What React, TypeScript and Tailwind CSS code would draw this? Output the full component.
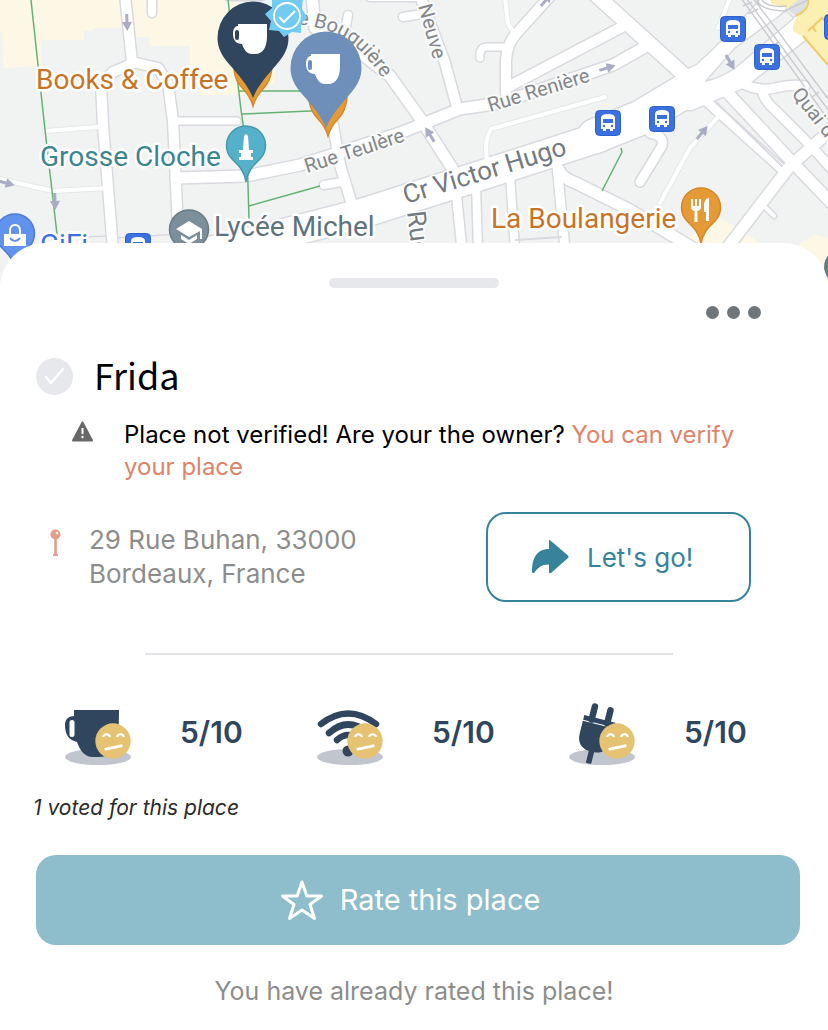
import type { ReactNode } from "react"

interface Road {
    d: string;
    width: number;
}

const roads: Road[] = [
    { d: "M125 -5L132 62L158 68L168 84L173 121L179 250", width: 10 },
    { d: "M132 64L113 72L101 84L103 125L113 250", width: 10 },
    { d: "M152 -5V13", width: 8 },
    { d: "M228 -4H262", width: 8 },
    { d: "M173 121H237", width: 7 },
    { d: "M176 178L246 176L300 165L400 133L460 109L500 103L613 65L645 47", width: 11 },
    { d: "M333 125L340 165L353 208", width: 10 },
    { d: "M324 185L342 182", width: 8 },
    { d: "M312 -5L315 28L350 45L390 76L420 118L452 168", width: 11 },
    { d: "M348 15L345 32", width: 8 },
    { d: "M370 -4L420 -4L445 63L457 107", width: 10 },
    { d: "M403 17L422 14", width: 8 },
    { d: "M190 256L270 237L360 214L473 178L600 137", width: 29 },
    { d: "M595 136L640 118L700 82", width: 34 },
    { d: "M692 86L724 56L785 -8", width: 24 },
    { d: "M690 98L738 77L806 24", width: 24 },
    { d: "M506 93V60Q507 44 516 34L552 -6", width: 10 },
    { d: "M506 88L622 27", width: 10 },
    { d: "M596 -5L692 82", width: 14 },
    { d: "M507 47H486Q479 48 480 58", width: 7 },
    { d: "M456 190L462 250", width: 9 },
    { d: "M476 185L478 250", width: 8 },
    { d: "M510 175L515 250", width: 8 },
    { d: "M557 165L565 250", width: 9 },
    { d: "M559 170Q562 178 576 183L630 210L696 250", width: 11 },
    { d: "M650 133Q665 136 662 146L640 182", width: 9 },
    { d: "M705 100L785 172", width: 9 },
    { d: "M725 90L795 165L840 212", width: 11 },
    { d: "M724 252L790 166L840 122", width: 11 },
    { d: "M740 82Q757 92 775 88Q790 84 805 86", width: 9 },
    { d: "M762 90Q764 101 776 111L810 145L840 178", width: 9 },
    { d: "M766 208L774 216", width: 4 },
]

const lightRoads = [
    "M45 131L99 127",
    "M0 179L53 191L107 188",
    "M505 -2L508 24L516 36",
    "M605 97L491 129Q484 140 487 160",
    "M660 203L690 148L717 118",
    "M730 -2L718 28",
]

const greenLines = [
    "M31 0L45 130L58 243",
    "M228 0L241 110L247 150L249 220",
    "M239 91H310",
    "M242 114L332 110",
    "M249 206L320 186",
    "M621 148L622 152L602 191",
]

const busStops = [[720, 16], [754, 44], [649, 106], [595, 110], [824, 14], [125, 233]]

// x, y, rotation in degrees, 0 points to the right
const arrows = [[127, 22, 88], [55, 201, 88], [6, 183, 15], [430, 135, -122], [607, 68, -17], [730, 62, 60], [702, 133, -50], [546, 0, -50]]

const Arrow = ({ x, y, angle }: { x: number; y: number; angle: number }) => (
    <g transform={`translate(${x} ${y}) rotate(${angle})`} fill="#a9acc4">
        <path d="M-8 -1.500H0V-5L9 0L0 5V1.500H-8Z" />
    </g>
)

const BusStop = ({ x, y }: { x: number; y: number }) => (
    <g transform={`translate(${x} ${y})`}>
        <rect x="0.5" y="0.5" width="25" height="25" rx="4" fill="#3a70df" stroke="#2d60cb" />
        <path d="M6 19V8Q6 4 13 4Q20 4 20 8V19H18V21H15V19H11V21H8V19Z" fill="#fff" />
        <path d="M8 9H18V13H8Z" fill="#3a70df" />
        <circle cx="9" cy="16" r="1.2" fill="#3a70df" />
        <circle cx="17" cy="16" r="1.2" fill="#3a70df" />
    </g>
)

const SmallPin = ({ x, y, fill, stroke, children }: { x: number; y: number; fill: string; stroke: string; children?: ReactNode }) => (
    <g transform={`translate(${x} ${y})`}>
        <path d="M0 36C-2 24 -7 20 -14 13A19.500 19.500 0 1 1 14 13C7 20 2 24 0 36Z" fill={fill} stroke={stroke} strokeWidth="1.500" />
        {children}
    </g>
)

// The orange pin is the map's own one, half hidden behind ours
const CoffeePin = ({ x, y, spot, fill }: { x: number; y: number; spot: number; fill: string }) => (
    <g transform={`translate(${x} ${y})`}>
        <path
            transform={`translate(${spot} 0)`}
            d="M-19 32C-18 40 -15 46 -10 51C-4 57 -2 61 0 68C2 61 4 57 10 51C15 46 18 40 19 30Z"
            fill="#e59b35"
            stroke="#d98529"
            strokeWidth="1.500"
        />
        <path d="M0 60C-5 47 -14 38 -24 26C-31 18 -35.500 10 -35.500 0A35.500 36.500 0 0 1 35.500 0C35.500 10 31 18 24 26C14 38 5 47 0 60Z" fill={fill} />
        <path d="M-15 -14H14V-2C14 9 10 16 2 16H-1C-6 16 -9 12 -11 6C-17 6 -20 2 -20 -4C-20 -9 -18 -12 -15 -12Z" fill="#fff" />
        <rect x="-18" y="-8" width="4" height="10" rx="2" fill={fill} />
    </g>
)

const label = "fill-[#5d737e] stroke-white stroke-[5px] [paint-order:stroke] [stroke-linejoin:round]"
const street = "fill-[#84868a] stroke-[#f8f9f9] stroke-[4px] [paint-order:stroke] [stroke-linejoin:round]"

const CityMap = () => (
    <svg
        className="block w-full h-72 bg-[#f1f3f3] font-[Roboto,sans-serif]"
        viewBox="0 0 828 288"
        preserveAspectRatio="xMidYMin slice"
        role="img"
        aria-label="Map"
    >
        <rect width="828" height="288" fill="#f1f3f3" />
        <path d="M0 0H240L247 70H275V84H247V95H200V84H190V46H150L149 37H122V28H94V31H84V40H41V66L4 68L2 32H0Z" fill="#fdf8e6" />
        <path d="M680 243L720 218L750 236L760 243ZM790 250L815 234L828 238V288Z" fill="#fdf8e6" />

        <g fill="none" strokeLinecap="round" strokeLinejoin="round">
            <path d="M58 238L108 236M113 238L180 234" stroke="#d9dae0" strokeWidth="1.500" />
            {roads.map((road) => (
                <path key={road.d} d={road.d} stroke="#d9dae0" strokeWidth={road.width + 3} />
            ))}
            {lightRoads.map((d) => (
                <path key={d} d={d} stroke="#e6e7e8" strokeWidth="6" />
            ))}
            {roads.map((road) => (
                <path key={road.d} d={road.d} stroke="#fff" strokeWidth={road.width} />
            ))}
            {lightRoads.map((d) => (
                <path key={d} d={d} stroke="#fff" strokeWidth="4" />
            ))}
            <path d="M706 81L735 48L786 11L794 18L768 40L735 68Q720 78 706 81Z" fill="#f1f3f3" stroke="#d9dae0" strokeWidth="1.500" />
            <path d="M716 102L782 166" stroke="#d9dae0" strokeWidth="2" />
            <path d="M516 240L561 237" stroke="#d9dae0" strokeWidth="2" />
        </g>

        <path d="M770 0H828V66L803 37L793 31Q792 20 800 15Q786 6 772 4Z" fill="#fcefb2" />
        <path d="M803 36L828 65M808 31L822 18L828 24M812 26L816 32" stroke="#f0cb6a" strokeWidth="2" fill="none" />
        <path d="M787 9L798 0H806Q810 8 796 16Z" fill="#dcdee2" />
        <path d="M808 0Q810 9 796 16" stroke="#f0cb6a" strokeWidth="2" fill="none" />
        <g stroke="#cbccd0" strokeWidth="1.500" fill="none">
            <path d="M741 -2L830 122M746 -2L834 118M753 -2L840 115M757 0Q760 10 785 11L808 0M762 0Q768 8 787 6" />
            <path d="M743 6L752 2M748 14L758 9M771 47L779 42M812 97L819 92" />
        </g>
        <g stroke="#64b272" strokeWidth="1.500" fill="none">
            {greenLines.map((d) => (
                <path key={d} d={d} />
            ))}
        </g>
        {arrows.map(([x, y, angle]) => (
            <Arrow key={`${x}-${y}`} x={x} y={y} angle={angle} />
        ))}

        <path id="bouguiere" d="M274 24Q322 22 350 42Q370 57 396 98" fill="none" />
        <g fontSize="20" className={street}>
            <text><textPath href="#bouguiere">Rue Bouguière</textPath></text>
            <text transform="translate(307 173) rotate(-18)">Rue Teulère</text>
            <text transform="translate(490 112) rotate(-17)">Rue Renière</text>
            <text transform="translate(418 6) rotate(74)">Neuve</text>
            <text transform="translate(791 94) rotate(52)">Quai des</text>
        </g>
        <g fontSize="26" fill="#747b80" stroke="#fff" strokeWidth="3" paintOrder="stroke">
            <text transform="translate(406 204) rotate(-17)">Cr Victor Hugo</text>
            <text transform="translate(407 212) rotate(83)">Rue</text>
        </g>
        <g fontSize="28" className={label}>
            <text x="36" y="89" className="fill-[#c87428]">Books &amp; Coffee</text>
            <text x="40" y="166" className="fill-[#3b8590]">Grosse Cloche</text>
            <text x="214" y="236">Lycée Michel</text>
            <text x="491" y="228" className="fill-[#c87428]">La Boulangerie</text>
            <text x="40" y="254" className="fill-[#3a70df]">GiFi</text>
        </g>

        {busStops.map(([x, y]) => (
            <BusStop key={`${x}-${y}`} x={x} y={y} />
        ))}

        <SmallPin x={246} y={146} fill="#54b1c9" stroke="#4599ab">
            <path d="M0 -12L2 -10L3 4H7V7H5V11H7V14H-7V11H-5V7H-7V4H-3L-2 -10Z" fill="#fff" />
        </SmallPin>
        <SmallPin x={701} y={208} fill="#e59b35" stroke="#d98529">
            <path d="M-10 -9V-1Q-10 2 -6.500 3V14H-3.500V3Q0 2 0 -1V-9H-2V-2H-4V-9H-6V-2H-8V-9ZM3 4V-4Q4 -10 8 -10V13H5V4Z" fill="#fff" />
        </SmallPin>
        <SmallPin x={189} y={230} fill="#7b8f9b" stroke="#687b84">
            <path d="M-13 -1L0 -9L13 -1V9H11V1L0 7ZM-8 5L0 10L8 5V9L0 14L-8 9Z" fill="#fff" />
        </SmallPin>
        <SmallPin x={15} y={234} fill="#6192ee" stroke="#4c7bd8">
            <path d="M-11 0H11V12H-11Z" fill="#fff" />
            <path d="M-5 0V-3Q-5 -9 0 -9Q5 -9 5 -3V0" stroke="#fff" strokeWidth="2" fill="none" />
            <path d="M-5 4Q0 10 5 4" stroke="#6192ee" strokeWidth="2" fill="none" />
        </SmallPin>
        <circle cx="842" cy="267" r="18" fill="#687b84" />

        <CoffeePin x={253} y={38} spot={0} fill="#30465f" />
        <path
            transform="translate(286 16)"
            d="M-3 -21L5 -17L17 -18L16 -7L21 1L15 8L15 17L6 16L-2 21L-7 15L-17 14L-15 5L-21 -2L-14 -8L-14 -18L-7 -16Z"
            fill="#74cbf2"
        />
        <circle cx="287" cy="16" r="13" fill="none" stroke="#fff" strokeWidth="1.800" />
        <path d="M279 17L284 22L295 11" fill="none" stroke="#fff" strokeWidth="2" />
        <CoffeePin x={326} y={68} spot={2} fill="#6d8fb9" />
    </svg>
)

const MehFace = () => (
    <g>
        <circle cx="48" cy="40" r="17.700" fill="#e5c373" />
        <path d="M38 36A3.600 3.600 0 0 1 45 36M52 36A3.600 3.600 0 0 1 59 36" fill="none" stroke="#fff" strokeWidth="2.200" />
        <path d="M41 48L56 45" stroke="#fff" strokeWidth="2.800" strokeLinecap="square" />
    </g>
)

const CupDrawing = () => (
    <g>
        <path d="M9 9H54C54 37 52 56 34 56H28C19 56 15 49 12 41C4 39 0 34 0 24C0 18 4 15 9 15Z" fill="#30465f" />
        <rect x="4.500" y="19" width="5" height="17" rx="2.500" fill="#fff" />
    </g>
)

const WifiDrawing = () => (
    <g>
        <g fill="none" stroke="#30465f" strokeWidth="6.500" strokeLinecap="round">
            <path d="M4 23Q31 2 59 23" />
            <path d="M12 32Q31 15 51 32" />
            <path d="M20 39Q31 29 44 39" />
        </g>
        <circle cx="31" cy="50" r="5.500" fill="#30465f" />
    </g>
)

const PlugDrawing = () => (
    <g transform="translate(26 29) rotate(14)" fill="#30465f">
        <rect x="-9" y="-26" width="6.500" height="20" rx="3.200" />
        <rect x="7" y="-26" width="6.500" height="20" rx="3.200" />
        <rect x="-14" y="-12" width="32" height="5" />
        <path d="M-14 -6H18V7C18 17 11 22 2 22C-8 22 -14 17 -14 7Z" />
        <rect x="-1" y="18" width="5.500" height="16" rx="1" />
    </g>
)

interface RatingProps {
    name: string;
    score: string;
    drawing: ReactNode;
}

const ratings: RatingProps[] = [
    { name: "Coffee", score: "5/10", drawing: <CupDrawing /> },
    { name: "Wifi", score: "5/10", drawing: <WifiDrawing /> },
    { name: "Power", score: "5/10", drawing: <PlugDrawing /> },
]

const Rating = (props: RatingProps) => (
    <li className="flex items-center gap-12 pl-7">
        <svg width="68" height="66" viewBox="-1 0 68 66" role="img" aria-label={props.name}>
            <ellipse cx="33" cy="56" rx="33" ry="8" fill="#c0c5ce" />
            {props.drawing}
            <MehFace />
        </svg>
        <span className="pb-1 text-3xl font-semibold text-[#30465f]">{props.score}</span>
    </li>
)

export default function App() {
  return (
    <main className="bg-white font-[Inter,sans-serif]">
        <CityMap />

        <section className="relative -mt-[45px] rounded-t-[45px] bg-white pt-[35px] pr-7 pb-6 pl-9">
            <div className="pr-2">
                <div className="mx-auto h-[10px] w-[170px] rounded-full bg-[#e7e8ec]" />
            </div>

            <div className="flex justify-end pr-[39px] pt-[18px]">
                <button type="button" aria-label="More options" className="flex gap-2">
                    <span className="size-[13px] rounded-full bg-[#707579]" />
                    <span className="size-[13px] rounded-full bg-[#707579]" />
                    <span className="size-[13px] rounded-full bg-[#707579]" />
                </button>
            </div>

            <div className="mt-8 flex h-[50px] items-center gap-[21px]">
                <svg width="37" height="37" viewBox="0 0 37 37" aria-hidden="true">
                    <circle cx="18.500" cy="18.500" r="18.500" fill="#e7e8ec" />
                    <path d="M10 19L15 25L27 11" fill="none" stroke="#fff" strokeWidth="2.500" strokeLinecap="round" strokeLinejoin="round" />
                </svg>
                <h1 className="pb-1 font-['Noto_Sans_CJK_SC',sans-serif] text-4xl leading-10 text-black">Frida</h1>
            </div>

            <div className="mt-[18px] flex gap-[31px] pl-9">
                <svg className="mt-[2px] shrink-0" width="21" height="21" viewBox="0 0 21 21" aria-hidden="true">
                    <path d="M10.500 1.500L20 19.500H1Z" fill="#686868" stroke="#686868" strokeWidth="2" strokeLinejoin="round" />
                    <path d="M10.500 7V13" stroke="#fff" strokeWidth="2" />
                    <circle cx="10.500" cy="16" r="1.200" fill="#fff" />
                </svg>
                <p className="max-w-[640px] text-2xl leading-8 text-black">
                    Place not verified! Are your the owner?{" "}
                    <a href="#verify" className="text-[#e08368]">You can verify your place</a>
                </p>
            </div>

            <div className="mt-[29px] flex items-center justify-between pr-[49px] pl-[13px]">
                <div className="flex gap-[27px]">
                    <svg className="mt-[6px] shrink-0" width="13" height="28" viewBox="0 0 13 28" aria-hidden="true">
                        <path d="M5.200 8H7.800V25H9V27H4V25H5.200Z" fill="#e59d88" />
                        <circle cx="6.500" cy="5.500" r="5" fill="#e59d88" />
                        <circle cx="8" cy="4" r="1.300" fill="#fff" />
                    </svg>
                    <address className="text-[26px] leading-[34px] text-[#8d8d8d] not-italic">
                        29 Rue Buhan, 33000
                        <br />
                        Bordeaux, France
                    </address>
                </div>
                <button type="button" className="flex h-[90px] w-[265px] items-center gap-[18px] rounded-[20px] border-2 border-[#38839c] pl-[43px] text-[26px] text-[#38839c]">
                    <svg width="38" height="34" viewBox="0 0 38 34" fill="currentColor" aria-hidden="true">
                        <path d="M18 1Q18 -1 20 1L37 15.500Q38 17 37 18L20 33Q18 34 18 32V24.500C10 24.500 7 28 3.500 32.500Q1 34 1 31.500C1 18 6 9 18 9Z" />
                    </svg>
                    Let's go!
                </button>
            </div>

            <hr className="mt-[51px] mr-[127px] ml-[109px] border-t-2 border-[#e2e3e7]" />

            <ul className="mt-[46px] mr-2 grid grid-cols-3">
                {ratings.map((rating) => (
                    <Rating key={rating.name} {...rating} />
                ))}
            </ul>

            <p className="-ml-[3px] mt-[25px] text-[21px] leading-8 text-[#2b2b2b] italic">1 voted for this place</p>

            <button type="button" className="mt-[31px] flex h-[90px] w-full items-center justify-center gap-4 rounded-[20px] bg-[#8ebecc] pr-4 text-[29px] text-white">
                <svg width="44" height="42" viewBox="0 0 44 42" fill="none" stroke="currentColor" strokeWidth="3" strokeLinejoin="round" aria-hidden="true">
                    <path d="M22 3L26.800 17H41.500L30 25.500L34.500 39.500L22 31L9.500 39.500L14 25.500L2.500 17H17.200Z" />
                </svg>
                Rate this place
            </button>

            <p className="mt-[30px] mr-2 text-center text-[25px] leading-8 text-[#8d8d8d]">You have already rated this place!</p>
        </section>
    </main>
  )
}
